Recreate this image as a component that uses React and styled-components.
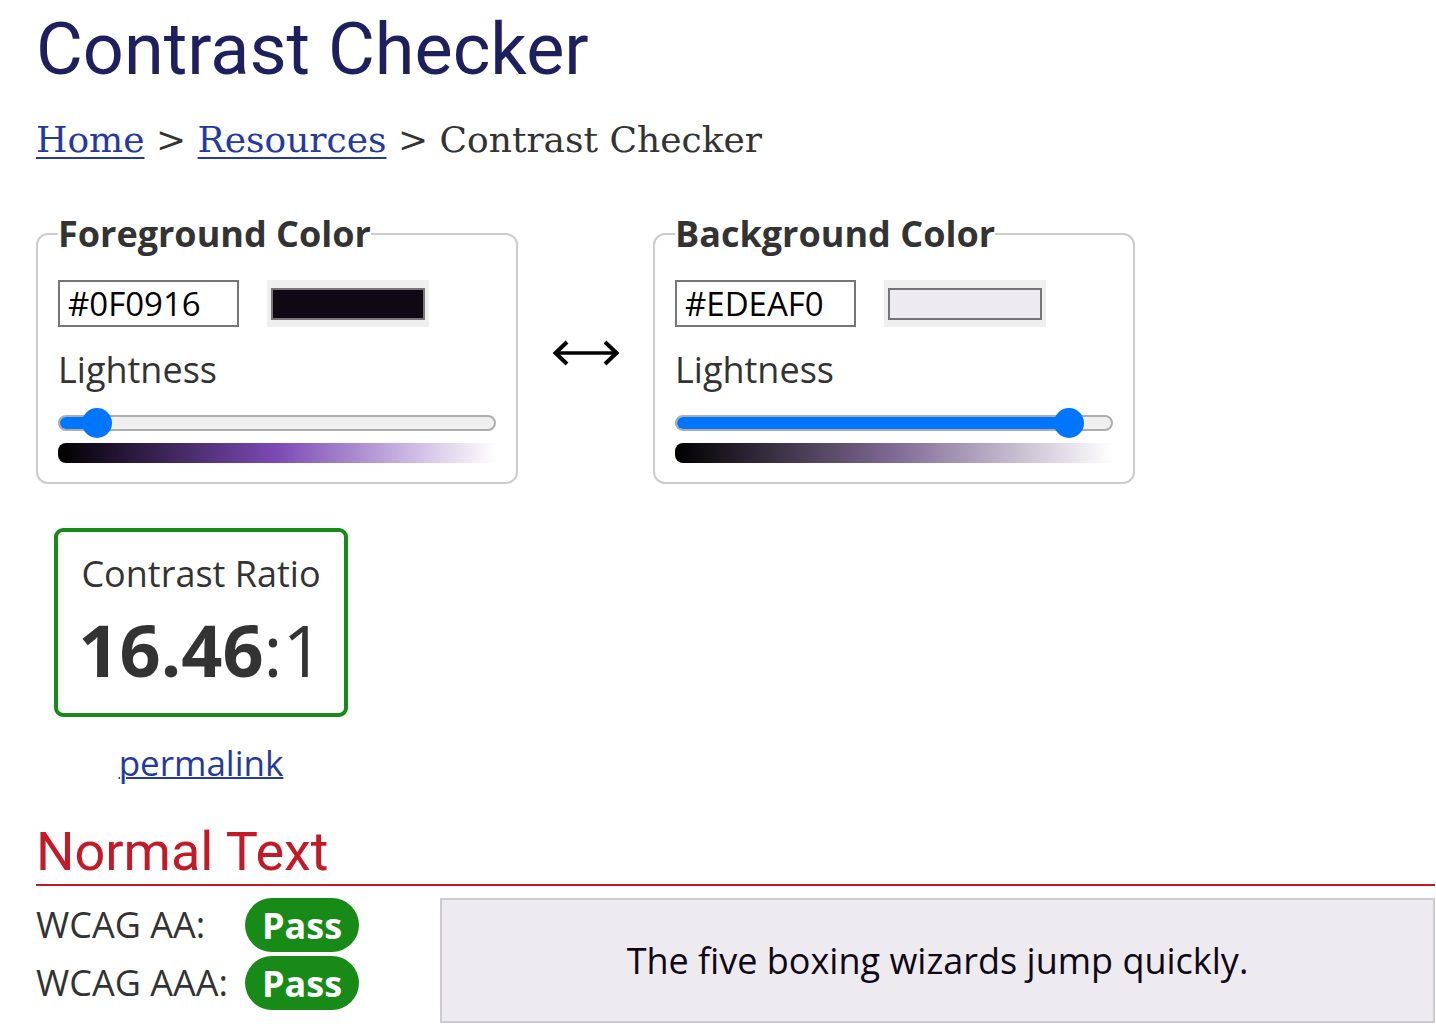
import React from "react"
import styled, { createGlobalStyle } from "styled-components"

const GlobalStyle = createGlobalStyle`
  html, body {
    margin: 0;
    padding: 0;
    background: #fff;
  }
  body {
    font-family: "Open Sans", "Liberation Sans", sans-serif;
    color: #333;
  }
`

const Page = styled.main`
  padding: 0 1px 0 36px;
`

const Title = styled.h1`
  font-family: Roboto, "Liberation Sans", sans-serif;
  font-weight: 400;
  font-size: 72px;
  line-height: 86px;
  color: #1d1f5e;
  margin: 7px 0 0;
`

const Crumbs = styled.nav`
  font-family: "DejaVu Serif", "Liberation Serif", serif;
  font-size: 36px;
  line-height: 50px;
  color: #333;
  margin-top: 22px;
  a {
    color: #253aa0;
    text-decoration: underline;
    text-decoration-thickness: 2px;
    text-underline-offset: 5px;
  }
`

const Pickers = styled.div`
  display: flex;
  align-items: center;
  margin-top: 48px;
`

const Fieldset = styled.fieldset`
  box-sizing: border-box;
  width: 482px;
  margin: 0;
  min-width: 0;
  padding: 0 20px 19px;
  border: 2px solid #ccc;
  border-radius: 12px;
`

const Legend = styled.legend`
  padding: 0;
  font-size: 36px;
  line-height: 42px;
  font-weight: 700;
  color: #333;
`

const InputRow = styled.div`
  display: flex;
  gap: 28px;
  margin-top: 25px;
  height: 47px;
`

const HexInput = styled.input`
  box-sizing: border-box;
  width: 181px;
  height: 47px;
  border: 2px solid #767676;
  border-radius: 0;
  padding: 0 8px;
  font-family: "Open Sans", "Liberation Sans", sans-serif;
  font-size: 33px;
  color: #000;
  outline: none;
`

const Swatch = styled.div`
  box-sizing: border-box;
  width: 162px;
  height: 47px;
  background: #efefef;
  padding: 8px 4px 7px;
`

const SwatchFill = styled.div`
  box-sizing: border-box;
  height: 100%;
  border: 2px solid #767676;
  background: ${(p) => p.$color};
`

const Label = styled.div`
  font-size: 36px;
  line-height: 50px;
  margin-top: 18px;
  color: #333;
`

const Slider = styled.div`
  position: relative;
  height: 30px;
  margin-top: 13px;
  display: flex;
  align-items: center;
`

const Track = styled.div`
  box-sizing: border-box;
  width: 100%;
  height: 16px;
  border: 2px solid #adadad;
  border-radius: 8px;
  background: #efefef;
  overflow: hidden;
`

const Fill = styled.div`
  height: 100%;
  background: #0075ff;
`

const Thumb = styled.div`
  position: absolute;
  top: 0;
  width: 30px;
  height: 30px;
  margin-left: -15px;
  border-radius: 50%;
  background: #0075ff;
`

const Gradient = styled.div`
  height: 20px;
  margin-top: 5px;
  border-radius: 8px 0 0 8px;
  background: ${(p) => p.$bg};
`

const Swap = styled.div`
  width: 135px;
  display: flex;
  justify-content: center;
  padding-top: 8px;
`

const RatioWrap = styled.div`
  width: 294px;
  margin: 44px 0 0 18px;
  text-align: center;
`

const RatioBox = styled.div`
  box-sizing: border-box;
  width: 294px;
  height: 189px;
  border: 4px solid #188a18;
  border-radius: 9px;
  padding-top: 17px;
`

const RatioLabel = styled.div`
  font-size: 36px;
  line-height: 49px;
  color: #333;
`

const RatioValue = styled.div`
  font-size: 72px;
  line-height: 84px;
  margin-top: 9px;
  color: #333;
  b {
    font-weight: 700;
  }
`

const Permalink = styled.a`
  display: inline-block;
  margin-top: 21px;
  font-size: 35px;
  line-height: 49px;
  color: #253aa0;
  text-decoration-thickness: 2px;
`

const SectionTitle = styled.h2`
  font-family: Roboto, "Liberation Sans", sans-serif;
  font-weight: 400;
  font-size: 54px;
  line-height: 65px;
  color: #c21b27;
  margin: 32px 0 0;
  border-bottom: 2px solid #c21b27;
`

const Results = styled.div`
  display: flex;
  align-items: flex-start;
  margin-top: 12px;
`

const Checks = styled.div`
  display: grid;
  grid-template-columns: 209px auto;
  row-gap: 4px;
  align-items: center;
`

const CheckLabel = styled.span`
  font-size: 36px;
  line-height: 54px;
  color: #333;
`

const Badge = styled.span`
  display: flex;
  align-items: center;
  justify-content: center;
  width: 114px;
  height: 54px;
  border-radius: 27px;
  background: ${(p) => (p.$pass ? "#188a18" : "#c21b27")};
  color: #fff;
  font-size: 36px;
  font-weight: 700;
`

const Sample = styled.div`
  box-sizing: border-box;
  flex: 1;
  height: 125px;
  margin-left: 81px;
  border: 2px solid #ccc;
  display: flex;
  align-items: center;
  justify-content: center;
  font-size: 36px;
  background: ${(p) => p.$bg};
  color: ${(p) => p.$fg};
`

const SwapIcon = () => (
  <svg width="68" height="28" viewBox="0 0 68 28" fill="none">
    <path d="M4 14H64" stroke="#000" strokeWidth="3.6" />
    <path d="M15 3L3.5 14L15 25" stroke="#000" strokeWidth="4" strokeLinejoin="miter" />
    <path d="M53 3L64.5 14L53 25" stroke="#000" strokeWidth="4" strokeLinejoin="miter" />
  </svg>
)

const ColorPicker = ({ title, hex, hue, sat, light }) => {
  const pos = `calc(15px + (100% - 30px) * ${light / 100})`
  return (
    <Fieldset>
      <Legend>{title}</Legend>
      <InputRow>
        <HexInput defaultValue={hex} />
        <Swatch>
          <SwatchFill $color={hex} />
        </Swatch>
      </InputRow>
      <Label>Lightness</Label>
      <Slider>
        <Track>
          <Fill style={{ width: pos }} />
        </Track>
        <Thumb style={{ left: pos }} />
      </Slider>
      <Gradient
        $bg={`linear-gradient(to right, hsl(${hue},${sat}%,0%), hsl(${hue},${sat}%,50%), hsl(${hue},${sat}%,100%))`}
      />
    </Fieldset>
  )
}

export default function App() {
  return (
    <>
      <GlobalStyle />
      <Page>
        <Title>Contrast Checker</Title>
        <Crumbs>
          <a href="#home">Home</a> &gt; <a href="#resources">Resources</a> &gt; Contrast Checker
        </Crumbs>

        <Pickers>
          <ColorPicker title="Foreground Color" hex="#0F0916" hue={268} sat={42} light={6} />
          <Swap>
            <SwapIcon />
          </Swap>
          <ColorPicker title="Background Color" hex="#EDEAF0" hue={270} sat={17} light={93} />
        </Pickers>

        <RatioWrap>
          <RatioBox>
            <RatioLabel>Contrast Ratio</RatioLabel>
            <RatioValue>
              <b>16.46</b>:1
            </RatioValue>
          </RatioBox>
          <Permalink href="#permalink">permalink</Permalink>
        </RatioWrap>

        <SectionTitle>Normal Text</SectionTitle>
        <Results>
          <Checks>
            <CheckLabel>WCAG AA:</CheckLabel>
            <Badge $pass>Pass</Badge>
            <CheckLabel>WCAG AAA:</CheckLabel>
            <Badge $pass>Pass</Badge>
          </Checks>
          <Sample $bg="#EDEAF0" $fg="#0F0916">
            The five boxing wizards jump quickly.
          </Sample>
        </Results>
      </Page>
    </>
  )
}
